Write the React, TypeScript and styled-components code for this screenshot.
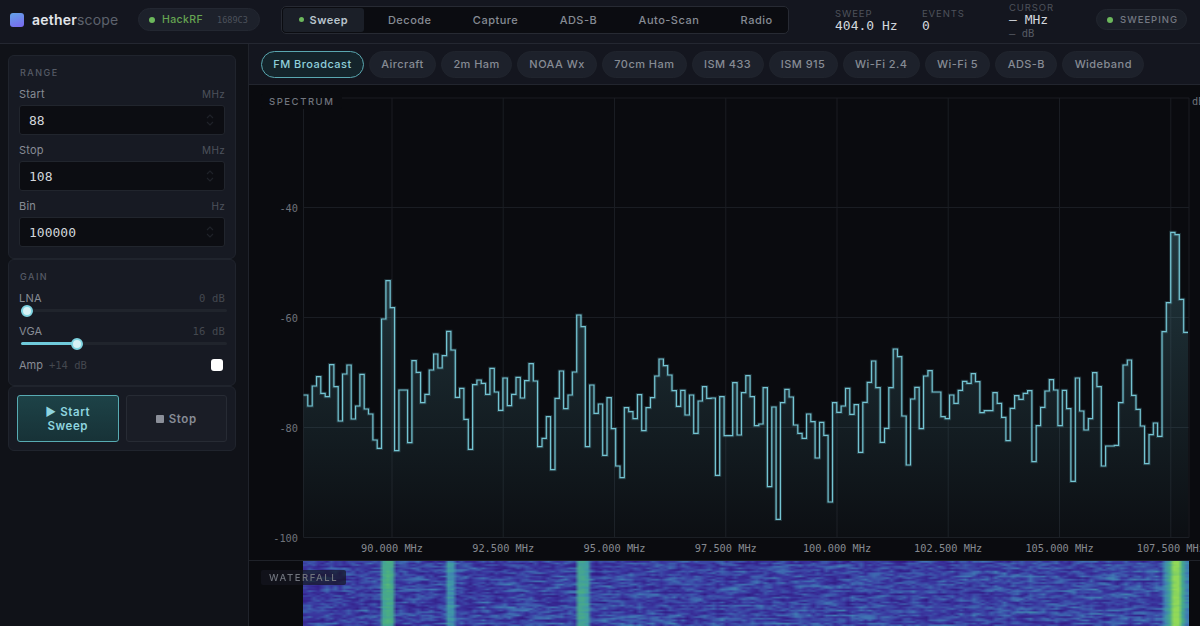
import { useEffect, useRef } from "react";
import styled, { createGlobalStyle } from "styled-components";

const sans = `Inter, "Noto Sans", sans-serif`;
const mono = `"DejaVu Sans Mono", "Liberation Mono", monospace`;

const GlobalStyle = createGlobalStyle`
  html, body {
    margin: 0;
    height: 100%;
    overflow: hidden;
    background: #0a0b0f;
  }
  * {
    box-sizing: border-box;
  }
`;

const Shell = styled.div`
  width: 1200px;
  height: 626px;
  display: flex;
  flex-direction: column;
  overflow: hidden;
  font-family: ${sans};
  background: #0a0b0f;
`;

const Header = styled.header`
  height: 44px;
  flex: none;
  display: flex;
  align-items: center;
  padding: 0 13px 4px 10px;
  background: #14161f;
  border-bottom: 1px solid #242731;
`;

const Logo = styled.div`
  width: 14px;
  height: 14px;
  flex: none;
  border-radius: 3px;
  background: linear-gradient(160deg, #63a4e8 0%, #7a66ee 100%);
`;

const Wordmark = styled.div`
  margin-left: 8px;
  font-size: 14px;
  font-weight: 600;
  letter-spacing: 0.2px;
  color: #e2e5ea;
  width: 106px;
  flex: none;
  span {
    color: #5d626d;
    font-weight: 400;
  }
`;

const Dot = styled.span<{ $size?: number }>`
  width: ${(p) => p.$size ?? 6}px;
  height: ${(p) => p.$size ?? 6}px;
  border-radius: 50%;
  flex: none;
  background: #6cb85c;
`;

const DevicePill = styled.div`
  width: 122px;
  height: 23px;
  flex: none;
  display: flex;
  align-items: center;
  gap: 7px;
  padding-left: 10px;
  border-radius: 12px;
  background: #1d212b;
  border: 1px solid #232731;
`;

const DeviceName = styled.span`
  font-size: 10.5px;
  font-weight: 500;
  letter-spacing: 0.4px;
  color: #66a552;
`;

const DeviceSerial = styled.span`
  margin-left: 7px;
  font-family: ${mono};
  font-size: 8.5px;
  color: #4c515b;
`;

const Tabs = styled.nav`
  margin-left: 21px;
  width: 508px;
  height: 28px;
  flex: none;
  display: flex;
  align-items: stretch;
  gap: 1.3px;
  padding: 1px;
  border: 1px solid #272a33;
  border-radius: 5px;
  background: #0b0c11;
`;

const Tab = styled.div<{ $active?: boolean }>`
  display: flex;
  align-items: center;
  gap: 6px;
  white-space: nowrap;
  padding: 0 ${(p) => (p.$active ? "15.5px" : "20px")};
  margin-right: ${(p) => (p.$active ? "3px" : "0")};
  font-size: 11px;
  font-weight: ${(p) => (p.$active ? 600 : 500)};
  letter-spacing: 0.5px;
  border-radius: 3px;
  color: ${(p) => (p.$active ? "#b9c4cc" : "#868b94")};
  background: ${(p) => (p.$active ? "#1b1f28" : "transparent")};
`;

const Stat = styled.div<{ $width: number }>`
  width: ${(p) => p.$width}px;
  display: flex;
  flex-direction: column;
`;

const Stats = styled.div`
  margin: 2px 0 0 46px;
  display: flex;
  align-items: center;
`;

const StatLabel = styled.span`
  font-size: 9.5px;
  line-height: 11px;
  letter-spacing: 0.9px;
  color: #4e525b;
`;

const StatValue = styled.span`
  font-family: ${mono};
  font-size: 13px;
  line-height: 14px;
  color: #d3d7dd;
`;

const StatSub = styled.span`
  font-family: ${mono};
  font-size: 10.5px;
  line-height: 12px;
  color: #565a63;
`;

const StatusPill = styled.div`
  margin-left: auto;
  width: 91px;
  height: 21px;
  flex: none;
  display: flex;
  align-items: center;
  gap: 7px;
  padding-left: 10px;
  border-radius: 11px;
  background: #1b1f28;
  border: 1px solid #22262f;
  font-size: 9.5px;
  font-weight: 500;
  letter-spacing: 1px;
  color: #747983;
`;

const Body = styled.div`
  flex: 1;
  min-height: 0;
  display: flex;
`;

const Sidebar = styled.aside`
  width: 249px;
  flex: none;
  padding: 11px 12px 0 8px;
  display: flex;
  flex-direction: column;
  background: #101218;
  border-right: 1px solid #20232b;
`;

const Card = styled.section<{ $height: number }>`
  height: ${(p) => p.$height}px;
  flex: none;
  padding: 11px 10px 0;
  border: 1px solid #20242d;
  border-radius: 6px;
  background: #171a23;
`;

const CardTitle = styled.div`
  font-size: 9px;
  line-height: 12px;
  font-weight: 500;
  letter-spacing: 1.5px;
  color: #565b66;
  margin: 0 0 7px 1px;
`;

const FieldHead = styled.div`
  display: flex;
  justify-content: space-between;
  align-items: center;
  height: 16px;
  font-size: 11px;
  letter-spacing: 0.2px;
  color: #878c95;
`;

const Unit = styled.span`
  font-size: 10px;
  letter-spacing: 0.3px;
  color: #4d525c;
`;

const InputBox = styled.div`
  height: 30px;
  margin: 3px 0 7px;
  display: flex;
  align-items: center;
  justify-content: space-between;
  padding: 0 10px 0 9px;
  border: 1px solid #21252d;
  border-radius: 3px;
  background: #0c0d12;
  font-family: ${mono};
  font-size: 13px;
  color: #d2d6db;
`;

const SliderValue = styled.span`
  font-family: ${mono};
  font-size: 10.5px;
  color: #44484f;
`;

const Track = styled.div`
  position: relative;
  height: 3px;
  margin: 3px -2px 11px 2px;
  border-radius: 2px;
  background: #20242c;
`;

const TrackFill = styled.div`
  height: 100%;
  border-radius: 2px;
  background: #6fcadb;
`;

const Thumb = styled.div`
  position: absolute;
  top: -4.5px;
  width: 12px;
  height: 12px;
  margin-left: -6px;
  border-radius: 50%;
  background: #d6f1f5;
  border: 2px solid #7fd3e0;
`;

const AmpRow = styled.div`
  display: flex;
  align-items: center;
  gap: 6px;
  height: 18px;
  font-size: 11px;
  color: #878c95;
`;

const Checkbox = styled.div`
  margin-left: auto;
  margin-right: 2px;
  width: 12px;
  height: 12px;
  border-radius: 3px;
  background: #ffffff;
`;

const ButtonRow = styled.div`
  display: flex;
  gap: 7px;
  margin: -3px -2px 0;
`;

const ActionButton = styled.div<{ $primary?: boolean }>`
  flex: 1;
  height: 47px;
  display: flex;
  align-items: center;
  justify-content: center;
  text-align: center;
  font-size: 11.5px;
  line-height: 14px;
  font-weight: 600;
  letter-spacing: 0.6px;
  border-radius: 3px;
  border: 1px solid ${(p) => (p.$primary ? "#58abb3" : "#272b34")};
  background: ${(p) =>
    p.$primary ? "linear-gradient(180deg, #1d4247, #173237)" : "#1a1d26"};
  color: ${(p) => (p.$primary ? "#8ed4df" : "#878c95")};
`;

const StopMark = styled.span`
  display: inline-block;
  width: 8px;
  height: 8px;
  margin-right: 5px;
  border-radius: 1px;
  background: #8b8f99;
`;

const Main = styled.main`
  flex: 1;
  min-width: 0;
  display: flex;
  flex-direction: column;
`;

const PresetBar = styled.div`
  height: 41px;
  flex: none;
  display: flex;
  align-items: center;
  gap: 5px;
  padding-left: 12px;
  background: #14161f;
  border-bottom: 1px solid #22252e;
`;

const Chip = styled.div<{ $active?: boolean }>`
  height: 27px;
  display: flex;
  align-items: center;
  padding: 0 11.3px;
  border-radius: 14px;
  font-size: 11px;
  font-weight: 500;
  letter-spacing: 0.45px;
  white-space: nowrap;
  border: 1px solid ${(p) => (p.$active ? "#5aa7b0" : "#20242d")};
  background: ${(p) => (p.$active ? "#14242b" : "#1d212b")};
  color: ${(p) => (p.$active ? "#8fcfdb" : "#868b94")};
`;

const SpectrumPane = styled.div`
  position: relative;
  height: 476px;
  flex: none;
  background: #0a0b0f;
  border-bottom: 1px solid #1f2229;
`;

const ChartSvg = styled.svg`
  display: block;
  width: 951px;
  height: 475px;
`;

const PaneLabel = styled.div`
  position: absolute;
  left: 12px;
  padding: 2px 8px;
  border-radius: 2px;
  font-size: 9.5px;
  font-weight: 500;
  letter-spacing: 1.55px;
  color: #70747d;
`;

const SpectrumLabel = styled(PaneLabel)`
  top: 9px;
  background: #0a0b0f;
`;

const WaterfallLabel = styled(PaneLabel)`
  top: 9px;
  background: rgba(20, 22, 31, 0.7);
`;

const AxisText = styled.text`
  font-family: ${mono};
  font-size: 10.3px;
`;

const WaterfallPane = styled.div`
  position: relative;
  flex: 1;
  min-height: 0;
  padding: 0 11px 0 54px;
  background: #0a0b0f;
`;

const WaterfallCanvas = styled.canvas`
  display: block;
  width: 886px;
  height: 65px;
`;

const tabs = ["Decode", "Capture", "ADS-B", "Auto-Scan", "Radio"];
const presets = [
  "Aircraft",
  "2m Ham",
  "NOAA Wx",
  "70cm Ham",
  "ISM 433",
  "ISM 915",
  "Wi-Fi 2.4",
  "Wi-Fi 5",
  "ADS-B",
  "Wideband",
];

const traceA = [
  435, 468, 408, 380, 430, 440, 344, 410, 513, 372, 345, 507, 468, 373, 477, 492, 570, 595, 207, 92,
  173, 602, 420, 420, 578, 332, 367, 458, 433, 360, 312, 354, 317, 244, 300, 442, 415, 508, 598, 404,
  390, 400, 433, 355, 426, 481, 384, 467, 433, 382, 444, 392, 341, 393, 590, 565, 500, 659, 445,
];
const traceB = [
  123, 236, 195, 126, -45, -10, 350, 165, 250, 222, 376, 203, 296, 408, 443, 233, 245, 266, 194, 302,
  233, 203, 138, 87, 107, 135, 182, 229, 181, 255, 195, 310, 213, 170, 205, 204, 436, 200, 317, 317,
  158, 315, 188, 137, 200, 287, 282, 173, 470, 231, 568, 218, 178, 201, 285, 310, 325, 252, 275, 384,
  277, 316, 516, 218, 247, 228, 175, 253, 224, 367, 217, 157, 93, 173,
];
const traceC = [
  667, 625, 503, 387, 410, 588, 735, 537, 502, 626, 468, 452, 516, 516, 590, 596, 525, 550, 511, 484,
  490, 461, 485, 578, 572, 572, 518, 550, 592, 662, 565, 527, 538, 520, 512, 725, 617, 562, 513, 479,
  510, 617, 511, 566, 784, 474, 573, 630, 596, 458, 500, 738, 678, 678, 676, 548, 435, 420, 526, 568,
  618, 731, 644, 609, 649, 335, 248, 37, 44, 238, 337,
];

const trace = [
  ...traceA.map((v) => 250 + v / 3),
  ...traceB.map((v) => 330 + v / 3),
  ...traceC.map((v) => 220 + v / 3),
];

const plot = { left: 303.5, right: 1189, top: 98, bottom: 537.5 };
const binWidth = (1188 - plot.left) / trace.length;
const gridX = [392, 503.2, 614.5, 725.8, 837, 948.2, 1059.5, 1170.8];
const freqLabels = ["90.000", "92.500", "95.000", "97.500", "100.000", "102.500", "105.000", "107.500"];
const dbTicks = [
  { y: 207.5, label: "-40" },
  { y: 317.5, label: "-60" },
  { y: 427.5, label: "-80" },
  { y: 537.5, label: "-100" },
];

const tracePath = trace
  .map((y, i) => `${i === 0 ? "M" : "H"}${(plot.left + i * binWidth).toFixed(1)} V${y.toFixed(1)}`)
  .join(" ")
  .replace(/^M([\d.]+) V/, "M$1 ")
  .concat(` H${(plot.left + trace.length * binWidth).toFixed(1)}`);

const fillPath = `${tracePath} V${plot.bottom} H${plot.left} Z`;

const colorStops: [number, number[]][] = [
  [0.1, [50, 26, 132]],
  [0.24, [58, 52, 158]],
  [0.36, [60, 90, 172]],
  [0.46, [64, 124, 181]],
  [0.56, [63, 154, 166]],
  [0.72, [76, 176, 128]],
  [0.95, [147, 218, 88]],
];

function colorAt(t: number) {
  if (t <= colorStops[0][0]) return colorStops[0][1];
  for (let i = 1; i < colorStops.length; i++) {
    const [t1, c1] = colorStops[i];
    const [t0, c0] = colorStops[i - 1];
    if (t <= t1) {
      const k = (t - t0) / (t1 - t0);
      return c0.map((c, j) => c + (c1[j] - c) * k);
    }
  }
  return colorStops[colorStops.length - 1][1];
}

const waterfallPeaks: Record<number, number> = {
  18: 0.64, 19: 0.7, 20: 0.66,
  33: 0.54, 34: 0.52,
  63: 0.64, 64: 0.64, 65: 0.58,
  198: 0.5, 199: 0.64, 200: 0.93, 201: 0.95, 202: 0.66, 203: 0.48,
};

function Waterfall() {
  const ref = useRef<HTMLCanvasElement>(null);

  useEffect(() => {
    const ctx = ref.current?.getContext("2d");
    if (!ctx) return;
    const cols = 204;
    const rows = 40;
    const img = ctx.createImageData(cols, rows);
    let seed = 1337;
    const rand = () => {
      seed = (seed * 16807) % 2147483647;
      return seed / 2147483647;
    };
    const colBias = Array.from({ length: cols }, () => (rand() - 0.5) * 0.04);
    for (let r = 0; r < rows; r++) {
      const rowBias = (rand() - 0.5) * 0.04;
      let prev = 0;
      for (let c = 0; c < cols; c++) {
        const n = (rand() - 0.5) * 0.3;
        prev = prev * 0.5 + n * 0.8;
        const peak = waterfallPeaks[c];
        const t = peak
          ? peak + prev * 0.4
          : 0.27 + (c / cols) * 0.03 + colBias[c] + rowBias + prev;
        const rgb = colorAt(t);
        const o = (r * cols + c) * 4;
        img.data[o] = rgb[0];
        img.data[o + 1] = rgb[1];
        img.data[o + 2] = rgb[2];
        img.data[o + 3] = 255;
      }
    }
    ctx.putImageData(img, 0, 0);
  }, []);

  return <WaterfallCanvas ref={ref} width={204} height={40} />;
}

function Spinner() {
  return (
    <svg width="8" height="14" viewBox="0 0 8 14" fill="none" stroke="#1f2229" strokeWidth="1.2">
      <path d="M1 5 L4 2 L7 5" />
      <path d="M1 9 L4 12 L7 9" />
    </svg>
  );
}

function NumberField({ label, unit, value }: { label: string; unit: string; value: string }) {
  return (
    <>
      <FieldHead>
        {label}
        <Unit>{unit}</Unit>
      </FieldHead>
      <InputBox>
        {value}
        <Spinner />
      </InputBox>
    </>
  );
}

function GainSlider({ label, value, percent }: { label: string; value: string; percent: number }) {
  return (
    <>
      <FieldHead>
        {label}
        <SliderValue>{value}</SliderValue>
      </FieldHead>
      <Track>
        <TrackFill style={{ width: `${percent}%` }} />
        <Thumb style={{ left: `${percent}%` }} />
      </Track>
    </>
  );
}

function SpectrumChart() {
  return (
    <ChartSvg viewBox="249 85 951 475">
      <defs>
        <linearGradient id="traceFill" gradientUnits="userSpaceOnUse" x1="0" y1="230" x2="0" y2="537">
          <stop offset="0" stopColor="#6ec4d4" stopOpacity="0.24" />
          <stop offset="1" stopColor="#6ec4d4" stopOpacity="0.02" />
        </linearGradient>
      </defs>
      <g stroke="#1a1d23" strokeWidth="1">
        <line x1={plot.left} x2={plot.left} y1={plot.top} y2={plot.bottom} />
        <line x1={plot.right} x2={plot.right} y1={plot.top} y2={plot.bottom} />
        <line x1={plot.left} x2={plot.right} y1={plot.top} y2={plot.top} />
        {gridX.map((x) => (
          <line key={x} x1={x} x2={x} y1={plot.top} y2={plot.bottom} />
        ))}
        {dbTicks.map((t) => (
          <line key={t.y} x1={plot.left} x2={plot.right} y1={t.y} y2={t.y} />
        ))}
      </g>
      <path d={fillPath} fill="url(#traceFill)" />
      <path d={tracePath} fill="none" stroke="#6ec4d4" strokeOpacity="0.2" strokeWidth="3.2" />
      <path d={tracePath} fill="none" stroke="#74c4d2" strokeWidth="1.2" />
      {dbTicks.map((t) => (
        <AxisText key={t.label} x={298} y={t.y + 4} textAnchor="end" fill="#6d7179">
          {t.label}
        </AxisText>
      ))}
      {gridX.map((x, i) => (
        <AxisText key={x} x={x} y={552} textAnchor="middle" fill="#85898f">
          {freqLabels[i]} MHz
        </AxisText>
      ))}
      <AxisText x={1192} y={105} fill="#6d7179">
        dB
      </AxisText>
    </ChartSvg>
  );
}

export default function App() {
  return (
    <>
      <GlobalStyle />
      <Shell>
        <Header>
          <Logo />
          <Wordmark>
            aether<span>scope</span>
          </Wordmark>
          <DevicePill>
            <Dot />
            <DeviceName>HackRF</DeviceName>
            <DeviceSerial>1689C3</DeviceSerial>
          </DevicePill>
          <Tabs>
            <Tab $active>
              <Dot $size={5} />
              Sweep
            </Tab>
            {tabs.map((t) => (
              <Tab key={t}>{t}</Tab>
            ))}
          </Tabs>
          <Stats>
            <Stat $width={87}>
              <StatLabel>SWEEP</StatLabel>
              <StatValue>404.0 Hz</StatValue>
            </Stat>
            <Stat $width={87}>
              <StatLabel>EVENTS</StatLabel>
              <StatValue>0</StatValue>
            </Stat>
            <Stat $width={80}>
              <StatLabel>CURSOR</StatLabel>
              <StatValue>— MHz</StatValue>
              <StatSub>— dB</StatSub>
            </Stat>
          </Stats>
          <StatusPill>
            <Dot />
            SWEEPING
          </StatusPill>
        </Header>
        <Body>
          <Sidebar>
            <Card $height={204}>
              <CardTitle>RANGE</CardTitle>
              <NumberField label="Start" unit="MHz" value="88" />
              <NumberField label="Stop" unit="MHz" value="108" />
              <NumberField label="Bin" unit="Hz" value="100000" />
            </Card>
            <Card $height={127}>
              <CardTitle>GAIN</CardTitle>
              <GainSlider label="LNA" value="0 dB" percent={3} />
              <GainSlider label="VGA" value="16 dB" percent={27} />
              <AmpRow>
                Amp <SliderValue>+14 dB</SliderValue>
                <Checkbox />
              </AmpRow>
            </Card>
            <Card $height={65}>
              <ButtonRow>
                <ActionButton $primary>
                  ▶ Start
                  <br />
                  Sweep
                </ActionButton>
                <ActionButton>
                  <StopMark />
                  Stop
                </ActionButton>
              </ButtonRow>
            </Card>
          </Sidebar>
          <Main>
            <PresetBar>
              <Chip $active>FM Broadcast</Chip>
              {presets.map((p) => (
                <Chip key={p}>{p}</Chip>
              ))}
            </PresetBar>
            <SpectrumPane>
              <SpectrumChart />
              <SpectrumLabel>SPECTRUM</SpectrumLabel>
            </SpectrumPane>
            <WaterfallPane>
              <Waterfall />
              <WaterfallLabel>WATERFALL</WaterfallLabel>
            </WaterfallPane>
          </Main>
        </Body>
      </Shell>
    </>
  );
}
